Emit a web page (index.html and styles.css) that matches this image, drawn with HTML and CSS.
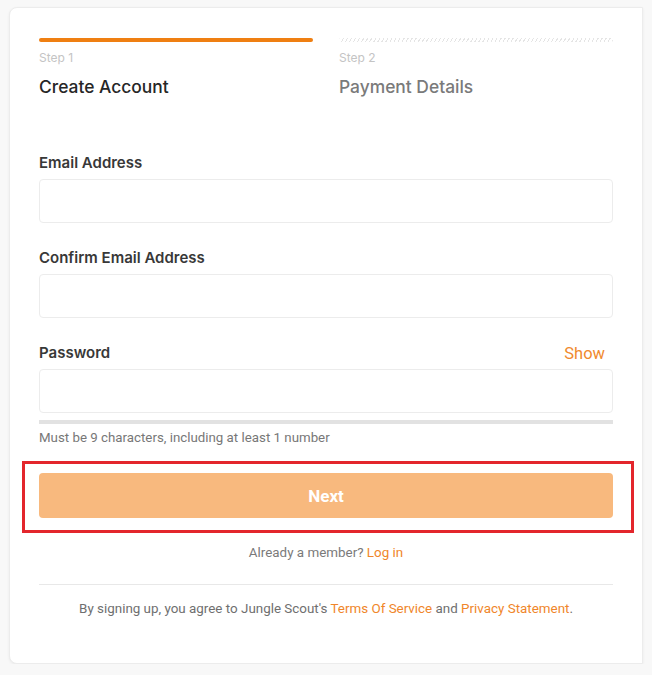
FILE: index.html
```html
<!DOCTYPE html>
<html lang="en">
<head>
<meta charset="utf-8">
<title>Create Account</title>
<link rel="stylesheet" href="styles.css">
</head>
<body>
<div class="card">
  <div class="steps">
    <div class="step">
      <div class="bar bar-active"></div>
      <div class="step-num">Step 1</div>
      <div class="step-title">Create Account</div>
    </div>
    <div class="step">
      <div class="bar bar-pending"></div>
      <div class="step-num">Step 2</div>
      <div class="step-title step-title-muted">Payment Details</div>
    </div>
  </div>

  <form class="form">
    <div class="field">
      <label class="label">Email Address</label>
      <div class="input"></div>
    </div>
    <div class="field">
      <label class="label">Confirm Email Address</label>
      <div class="input"></div>
    </div>
    <div class="field">
      <div class="label-row">
        <label class="label">Password</label>
        <span class="show">Show</span>
      </div>
      <div class="input"></div>
      <div class="strength"></div>
      <div class="hint">Must be 9 characters, including at least 1 number</div>
    </div>

    <div class="highlight">
      <div class="btn">Next</div>
    </div>
  </form>

  <div class="member">Already a member? <span class="link">Log in</span></div>
  <div class="divider"></div>
  <div class="terms">By signing up, you agree to Jungle Scout's <span class="link">Terms Of Service</span> and <span class="link">Privacy Statement</span>.</div>
</div>
</body>
</html>
```

FILE: styles.css
```css
* { box-sizing: border-box; }

html, body {
  margin: 0;
  padding: 0;
  background: #f8f8f8;
}

body {
  padding: 7px 0 0 9px;
  font-family: "Roboto", "Liberation Sans", sans-serif;
  color: #333;
}

.card {
  width: 634px;
  background: #ffffff;
  border: 1px solid #ececec;
  border-radius: 8px 0 0 8px;
  box-shadow: 0 1px 3px rgba(0,0,0,0.06);
  padding: 30px 29px 46px 29px;
}

.steps {
  display: grid;
  grid-template-columns: 1fr 1fr;
  column-gap: 26px;
}

.bar {
  height: 4px;
  border-radius: 2px;
}
.bar-active { background: #ef7f12; }
.bar-pending {
  background: repeating-linear-gradient(120deg, #dcdcdc 0 1px, #ffffff 1px 3.5px);
  opacity: 0.75;
}

.step-num {
  margin-top: 8px;
  font-family: "Inter", "Liberation Sans", sans-serif;
  font-size: 12px;
  line-height: 16px;
  color: #c4c4c4;
}

.step-title {
  margin-top: 10px;
  font-family: "Inter", "Liberation Sans", sans-serif;
  font-size: 17.4px;
  font-weight: 500;
  line-height: 22px;
  color: #262626;
}
.step-title-muted { color: #7a7a7a; }

.form {
  margin-top: 55px;
  display: flex;
  flex-direction: column;
}

.field + .field { margin-top: 25px; }

.label-row {
  display: flex;
  justify-content: space-between;
  align-items: center;
}

.label {
  display: block;
  font-family: "Inter", "Liberation Sans", sans-serif;
  font-size: 15px;
  font-weight: 600;
  line-height: 20px;
  color: #383838;
}

.show {
  font-family: "Roboto", "Liberation Sans", sans-serif;
  font-size: 16.5px;
  color: #f08a2e;
  margin-right: 8px;
  line-height: 20px;
  position: relative;
  top: 1px;
}

.input {
  margin-top: 6px;
  height: 44px;
  border: 1px solid #ececec;
  border-radius: 4px;
  background: #fff;
}

.strength {
  margin-top: 7px;
  height: 4px;
  background: #e2e2e2;
}

.hint {
  margin-top: 6px;
  font-size: 13.3px;
  line-height: 16px;
  color: #777777;
}

.highlight {
  margin: 15px -21px 0 -17px;
  border: 3px solid #e3262c;
  padding: 9px 18px 12px 14px;
}

.btn {
  height: 45px;
  border-radius: 4px;
  background: #f8b97e;
  color: #ffffff;
  font-family: "Roboto", "Liberation Sans", sans-serif;
  font-size: 17px;
  font-weight: 700;
  display: flex;
  align-items: center;
  justify-content: center;
}

.member {
  margin-top: 12px;
  text-align: center;
  font-size: 13.4px;
  line-height: 16px;
  color: #7a7a7a;
}

.link { color: #f0862a; }

.divider {
  margin-top: 23px;
  height: 1px;
  background: #e8e8e8;
}

.terms {
  margin-top: 16px;
  text-align: center;
  font-size: 13.4px;
  line-height: 16px;
  color: #6f6f6f;
}
```
